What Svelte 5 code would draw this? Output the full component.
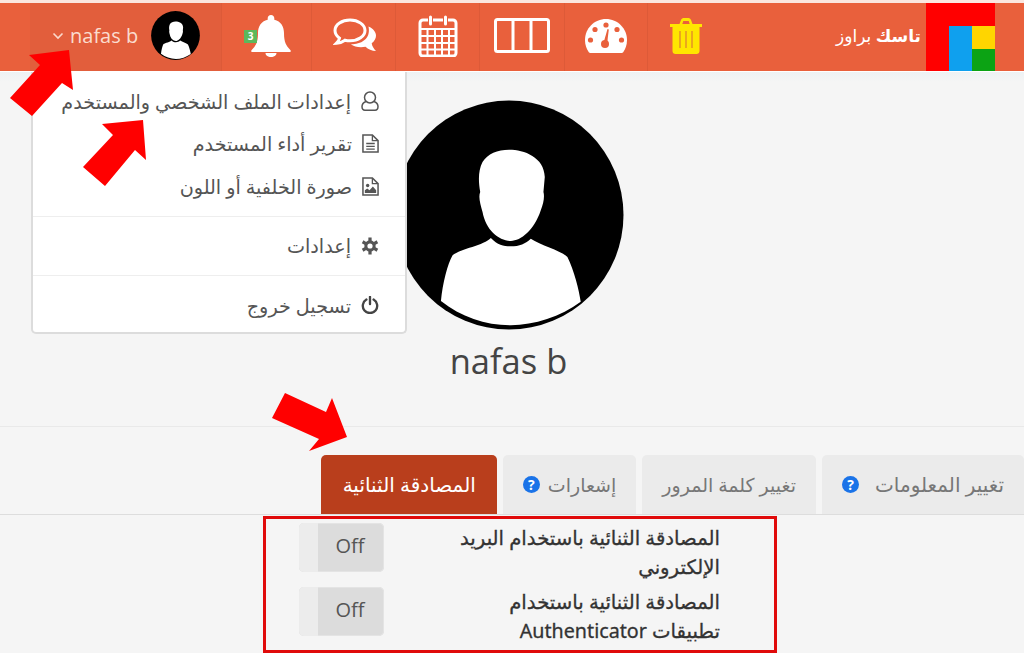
<script>
  const tabs = [
    { label: "تغيير المعلومات", help: true, wide: true },
    { label: "تغيير كلمة المرور" },
    { label: "إشعارات", help: true },
    { label: "المصادقة الثنائية", active: true }
  ];
  const settings = [
    "المصادقة الثنائية باستخدام البريد الإلكتروني",
    "المصادقة الثنائية باستخدام تطبيقات Authenticator"
  ];
</script>

{#snippet avatar()}
  <svg class="avatar-svg" viewBox="9 30 691 688">
    <circle cx="354.5" cy="374" r="344" fill="#000" />
    <path fill="#fff" d="M355 178C400 178 460 200 462 260L458 305C462 320 458 340 450 360C430 420 390 452 360 452C325 452 285 420 275 365C268 340 262 320 268 305C262 270 262 240 275 215C290 190 320 178 355 178Z" />
    <path fill="#fff" d="M300 443C320 465 340 468 360 468C385 468 405 460 420 445C450 465 510 480 530 500C550 540 565 600 570 635C510 680 430 705 360 705C285 705 210 680 150 632C155 580 170 520 185 495C210 475 280 465 300 443Z" />
  </svg>
{/snippet}

<div class="page">
  <header class="topbar">
    <div class="user-cell">
      <svg class="chevron" viewBox="0 0 12 8" width="12" height="8"><path d="M1.500 1.500 6 6l4.500-4.500" fill="none" stroke="#fbd9cc" stroke-width="1.600" /></svg>
      <span class="user-name">nafas b</span>
      <span class="user-avatar">{@render avatar()}</span>
    </div>

    <div class="cell bell-cell">
      <svg width="40" height="42" viewBox="0 0 40 42">
        <path fill="#fff" d="M20 0c2 0 3.300 1.400 3.300 3.200v1.500C30 6.200 33 11.500 33 18c0 9 2 12.500 6.300 17 .6.600.7 1.500 0 2H.7c-.7-.5-.6-1.400 0-2C5 30.500 7 27 7 18c0-6.500 3-11.800 9.700-13.300V3.200C16.700 1.400 18 0 20 0zM14.500 38h11c0 2.400-2.400 4-5.500 4s-5.500-1.600-5.500-4z" />
      </svg>
      <span class="badge">3</span>
    </div>

    <div class="cell chat-cell">
      <svg width="44" height="36" viewBox="0 0 44 36">
        <path fill="none" stroke="#fff" stroke-width="3" d="M17 2C9 2 2 6.500 2 12.500c0 3 1.800 5.700 4.500 7.700-.4 2-1.500 3.600-3 5 3.500-.2 6.300-1.400 8.500-3 1.600.4 3.300.6 5 .6 8.300 0 15-4.600 15-10.300S25.300 2 17 2z" />
        <path fill="#fff" d="M35.500 8.500c4.600 2 7.500 5.400 7.500 9.300 0 2.900-1.700 5.500-4.300 7.500.4 3 2 5.400 4.300 7.700-4 0-8-1.700-10.500-4.300-1.500.3-3 .5-4.500.5-4 0-7.600-1.100-10.200-3 8.700.2 20.500-4 17.700-17.700z" />
      </svg>
    </div>

    <div class="cell">
      <svg width="40" height="42" viewBox="0 0 40 42">
        <path fill="none" stroke="#fff" stroke-width="3" d="M10 5H5a3 3 0 0 0-3 3v30a3 3 0 0 0 3 3h30a3 3 0 0 0 3-3V8a3 3 0 0 0-3-3h-5M15 5h10" />
        <path fill="none" stroke="#fff" stroke-width="3" stroke-linecap="round" d="M12.500 2v7M27.500 2v7" />
        <path fill="none" stroke="#fff" stroke-width="2" d="M2 14h36M2 21h36M2 28h36M2 34.500h36M9.500 14v27M17 14v27M24 14v27M31 14v27" />
      </svg>
    </div>

    <div class="cell columns-cell">
      <svg width="56" height="35" viewBox="0 0 56 35">
        <rect x="1.500" y="1.500" width="53" height="32" rx="2" fill="none" stroke="#fff" stroke-width="3" />
        <path stroke="#fff" stroke-width="3" d="M19 2v31M37 2v31" />
      </svg>
    </div>

    <div class="cell gauge-cell">
      <svg width="42" height="34" viewBox="0 0 42 34">
        <path fill="#fff" d="M21 0C9.400 0 0 9.400 0 21c0 4.600 1.500 9 4 12.500.4.300.8.500 1.300.5h31.400c.5 0 .9-.2 1.300-.5 2.500-3.500 4-7.900 4-12.500C42 9.400 32.600 0 21 0z" />
        <g fill="#e9603c">
          <circle cx="21" cy="6" r="2.600" /><circle cx="10" cy="10.500" r="2.600" /><circle cx="32" cy="10.500" r="2.600" /><circle cx="5.500" cy="21" r="2.600" /><circle cx="36.500" cy="21" r="2.600" />
          <circle cx="20" cy="25" r="4" /><path d="M18.500 24 22.500 10l1.300.4-1.800 15z" />
        </g>
      </svg>
    </div>

    <div class="cell trash-cell">
      <svg width="32" height="36" viewBox="0 0 32 36">
        <path fill="#ffe600" d="M0 6h9.500l1.500-4c.4-1 1.200-2 2.500-2h5c1.300 0 2.100 1 2.500 2l1.500 4H32v3h-2.500v24c0 1.700-1.300 3-3 3h-21c-1.700 0-3-1.300-3-3V9H0zM12.300 6h7.400l-1-3h-5.400z" />
        <path stroke="#e9a020" stroke-width="1.800" d="M10 13v17M16 13v17M22 13v17" />
      </svg>
    </div>

    <div class="brand" dir="rtl"><b>تاسك</b> براوز</div>

    <div class="logo">
      <div class="logo-top"></div>
      <div class="logo-blue"></div>
      <div class="logo-side">
        <div class="logo-yellow"></div>
        <div class="logo-green"></div>
      </div>
    </div>
  </header>

  <nav class="menu" dir="rtl">
    <div class="menu-item">
      <svg viewBox="0 0 18 20" width="18" height="20"><circle cx="9" cy="6.500" r="5.500" fill="none" stroke="#555" stroke-width="1.500" /><path d="M5 10.500C2.500 11.500 1 13 1 15.500c0 2.500 1 3.700 3 3.700h10c2 0 3-1.200 3-3.700 0-2.500-1.500-4-4-5" fill="none" stroke="#555" stroke-width="1.500" /></svg>
      <span>إعدادات الملف الشخصي والمستخدم</span>
    </div>
    <div class="menu-item">
      <svg viewBox="0 0 18 20" width="17" height="19"><path d="M1 1h10l6 6v12H1z" fill="none" stroke="#555" stroke-width="1.600" /><path d="M11 1v6h6M4.500 10h9M4.500 13h9M4.500 16h9" fill="none" stroke="#555" stroke-width="1.400" /></svg>
      <span>تقرير أداء المستخدم</span>
    </div>
    <div class="menu-item">
      <svg viewBox="0 0 18 20" width="17" height="19"><path d="M1 1h10l6 6v12H1z" fill="none" stroke="#555" stroke-width="1.600" /><path d="M11 1v6h6" fill="none" stroke="#555" stroke-width="1.400" /><circle cx="6" cy="9" r="1.800" fill="#555" /><path d="M3 17v-3l2.500-2 2.500 2 3.500-4 3.500 4v3z" fill="#555" /></svg>
      <span>صورة الخلفية أو اللون</span>
    </div>
    <div class="menu-divider"></div>
    <div class="menu-item">
      <svg viewBox="0 0 20 20" width="18" height="18"><circle cx="10" cy="10" r="4.600" fill="none" stroke="#555" stroke-width="3.400" /><path d="M10 .5v4M10 15.500v4M1.800 5.300l3.500 2M14.700 12.700l3.500 2M1.800 14.700l3.500-2M14.700 7.300l3.500-2" stroke="#555" stroke-width="3.600" /></svg>
      <span>إعدادات</span>
    </div>
    <div class="menu-divider"></div>
    <div class="menu-item">
      <svg viewBox="0 0 20 20" width="18" height="18"><path d="M6 4a8 8 0 1 0 8 0M10 1v8" fill="none" stroke="#444" stroke-width="2.600" stroke-linecap="round" /></svg>
      <span>تسجيل خروج</span>
    </div>
  </nav>

  <section class="profile">
    <div class="profile-avatar">{@render avatar()}</div>
    <h1 class="profile-name">nafas b</h1>
  </section>

  <div class="tabs" dir="rtl">
    {#each tabs as tab}
      <div class="tab" class:active={tab.active} class:wide={tab.wide}>
        <span>{tab.label}</span>
        {#if tab.help}<span class="help">?</span>{/if}
      </div>
    {/each}
  </div>

  <div class="form-wrap">
    <div class="form-box">
      {#each settings as text}
        <div class="form-row">
          <div class="toggle">
            <span class="toggle-handle"></span>
            <span class="toggle-off">Off</span>
          </div>
          <div class="form-label" dir="rtl">{text}</div>
        </div>
      {/each}
    </div>
  </div>

  <svg class="arrows" viewBox="0 0 1024 653">
    <polygon points="69,50 29,55 40,65 10,98 32,116 62,83 73,90" />
    <polygon points="143,120 102,124 113,135 83,167 105,186 135,150 146,160" />
    <polygon points="347,437 332,398 326,412 285,393 272,418 319,439 309,451" />
  </svg>
</div>

<style>
  :global(body) {
    margin: 0;
    background: #f5f5f5;
  }

  .page {
    position: relative;
    width: 1024px;
    height: 653px;
    overflow: hidden;
    background: #f5f5f5;
    font-family: "Noto Sans", "Open Sans", "DejaVu Sans", sans-serif;
    color: #555;
    border-top: 3px solid #fbe6df;
    box-sizing: border-box;
  }

  .topbar {
    display: flex;
    align-items: stretch;
    height: 68px;
    box-sizing: border-box;
    padding: 0 0 3px 30px;
    background: #e9603c;
  }

  .user-cell {
    width: 192px;
    display: flex;
    align-items: center;
    padding-left: 22px;
    box-sizing: border-box;
    background: #e25e3c;
    border-right: 1px solid #dd5a38;
    margin-bottom: -3px;
    padding-bottom: 3px;
  }

  .chevron { margin-right: 6px; }

  .user-name {
    font-family: "Open Sans", sans-serif;
    font-size: 20px;
    color: #fbdccf;
    margin-right: 13px;
  }

  .user-avatar {
    width: 49px;
    height: 49px;
    display: block;
  }

  .avatar-svg {
    display: block;
    width: 100%;
    height: 100%;
  }

  .cell {
    width: 84px;
    display: flex;
    align-items: center;
    justify-content: center;
    border-right: 1px solid #dd5a38;
    box-sizing: border-box;
    margin-bottom: -3px;
    padding-bottom: 3px;
  }

  .bell-cell { width: 90px; position: relative; padding-left: 8px; }
  .chat-cell { width: 84px; padding-left: 3px; }
  .columns-cell { width: 85px; }
  .gauge-cell { width: 83px; }
  .trash-cell { width: 76px; border-right: 0; }

  .badge {
    position: absolute;
    left: 22px;
    top: 27px;
    width: 13px;
    height: 13px;
    background: #5cb85c;
    color: #fff;
    font-size: 10px;
    font-weight: 700;
    line-height: 13px;
    text-align: center;
    font-family: "Open Sans", sans-serif;
  }

  .brand {
    flex: 1;
    align-self: center;
    text-align: left;
    padding-left: 112px;
    color: #fff;
    font-size: 17px;
    white-space: nowrap;
  }

  .logo {
    width: 69px;
    height: 68px;
    display: grid;
    grid-template-columns: 23px 23px 23px;
    grid-template-rows: 23px 45px;
    background: #ff0000;
    margin-right: 29px;
  }

  .logo-top { grid-column: 1 / 4; }
  .logo-blue { grid-column: 2; grid-row: 2; background: #0fa0ee; }
  .logo-side { grid-column: 3; grid-row: 2; display: flex; flex-direction: column; }
  .logo-yellow { flex: 1; background: #ffd500; }
  .logo-green { flex: 1; background: #0ca314; }

  .menu {
    position: absolute;
    left: 31px;
    top: 69px;
    width: 376px;
    height: 262px;
    box-sizing: border-box;
    padding: 8px 0;
    background: #fff;
    border: 2px solid #dcdcdc;
    border-top: 0;
    border-radius: 0 0 5px 5px;
    z-index: 2;
  }

  .menu-item {
    display: flex;
    align-items: center;
    gap: 10px;
    height: 42.5px;
    padding-right: 26px;
    font-size: 19.2px;
    color: #555;
    white-space: nowrap;
  }

  .menu-item svg { flex-shrink: 0; }

  .menu-divider {
    height: 1px;
    background: #eee;
    margin: 8px 0;
  }

  .profile {
    height: 356px;
    box-sizing: border-box;
    border-top: 1px solid #fff;
    border-bottom: 1px solid #e9e9e9;
    background: linear-gradient(#eef2f4, #f5f5f5 10px);
    padding-top: 28px;
    padding-right: 7px;
    display: flex;
    flex-direction: column;
    align-items: center;
  }

  .profile-avatar {
    width: 230px;
    height: 230px;
  }

  .profile-name {
    margin: 8px 0 0;
    font-family: "Open Sans", sans-serif;
    font-size: 34.500px;
    font-weight: 400;
    line-height: 46px;
    color: #444;
  }

  .tabs {
    display: flex;
    gap: 6px;
    height: 60px;
    margin-top: 28px;
    border-bottom: 1px solid #ddd;
    box-sizing: border-box;
  }

  .tab {
    display: flex;
    align-items: center;
    gap: 8px;
    padding: 0 20px;
    background: #ebebeb;
    border-radius: 5px 5px 0 0;
    color: #777;
    font-size: 19px;
    white-space: nowrap;
  }

  .tab.wide { gap: 16px; font-size: 20px; }

  .tab.active {
    background: #b93e1c;
    color: #fff;
    font-size: 20px;
    padding: 0 21px 0 22px;
  }

  .help {
    width: 17px;
    height: 17px;
    border-radius: 50%;
    background: #1a73e8;
    color: #fff;
    font-family: "Open Sans", sans-serif;
    font-size: 14px;
    font-weight: 700;
    line-height: 17px;
    text-align: center;
  }

  .form-wrap {
    padding: 1px 0 0 263px;
  }

  .form-box {
    width: 514px;
    height: 137px;
    box-sizing: border-box;
    border: 3px solid #e00a0a;
    padding: 4px 54px 0 33px;
  }

  .form-row {
    display: flex;
    justify-content: space-between;
    height: 64px;
  }

  .toggle {
    position: relative;
    width: 85px;
    height: 49px;
    display: flex;
    background: #dcdcdc;
    border-radius: 5px;
    overflow: hidden;
    box-shadow: inset 0 0 0 1px #e4e4e4;
  }

  .toggle-handle {
    width: 19px;
    background: #ececec;
  }

  .toggle-off {
    flex: 1;
    text-align: center;
    font-family: "Open Sans", sans-serif;
    font-size: 20px;
    line-height: 45px;
    color: #555;
    padding-right: 2px;
  }

  .form-label {
    width: 264px;
    font-size: 19.700px;
    line-height: 29px;
    color: #333;
    -webkit-text-stroke: 0.3px #333;
  }

  .arrows {
    position: absolute;
    left: 0;
    top: -3px;
    width: 1024px;
    height: 653px;
    fill: #ff0000;
    pointer-events: none;
    z-index: 3;
  }
</style>
